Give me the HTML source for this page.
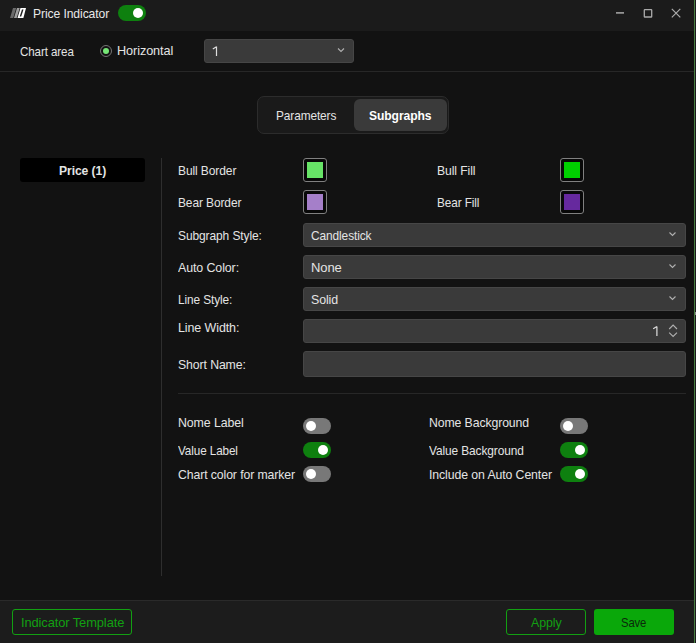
<!DOCTYPE html>
<html><head><meta charset="utf-8">
<style>
*{margin:0;padding:0;box-sizing:border-box}
html,body{width:696px;height:643px;overflow:hidden;background:#121212}
body{position:relative;font-family:"Liberation Sans",sans-serif;font-size:13px;color:#e4e4e4;letter-spacing:-0.45px}
.a{position:absolute}
.t{position:absolute;line-height:16px;white-space:nowrap}
.b{font-weight:bold}
.title{left:0;top:0;width:696px;height:31px;background:#1b1b1b}
.sep{height:1px;background:#272727}
.sel{background:#3a3a3a;border-radius:3px;border:1px solid #464646}
.chev{position:absolute;width:5px;height:5px;border-right:1.2px solid #b8b8b8;border-bottom:1.2px solid #b8b8b8;transform:rotate(45deg)}
.sw{position:absolute;width:24px;height:24px;border:1px solid #808080;border-radius:3px;background:#080808}
.sw i{position:absolute;left:3px;top:3px;width:16px;height:16px}
.tg{position:absolute;width:28px;height:16px;border-radius:8px;background:#787878}
.tg i{position:absolute;top:3px;left:3px;width:10px;height:10px;border-radius:50%;background:#fff}
.tg.on{background:#0e800f}
.tg.on i{left:15px}
.btn{position:absolute;height:26px;border:1px solid #12a012;border-radius:3px;color:#12a012}
.t{transform-origin:0 0}
</style></head><body>

<!-- title bar -->
<div class="a title"></div>
<div class="tg on" style="left:118px;top:5px"><i></i></div>
<svg class="a" style="left:0;top:0" width="40" height="31" viewBox="0 0 40 31">
  <polygon points="13,8 16.2,8 13.2,18 10,18" fill="#6a6a6a"/>
  <polygon points="17,8 19.7,8 16.7,18 14,18" fill="#a0a0a0"/>
  <polygon points="20.5,8 26,8 23.4,18 17.5,18" fill="#ffffff"/>
  <polygon points="22,9.6 23.5,9.6 21.2,16.6 19.7,16.6" fill="#1c1c1c"/>
</svg>
<svg class="a" style="left:600px;top:0" width="96" height="31" viewBox="600 0 96 31">
  <path d="M616 12.9H624" stroke="#aaaaaa" stroke-width="1.5"/>
  <rect x="644.3" y="9.6" width="7.4" height="7.4" fill="none" stroke="#aaaaaa" stroke-width="1.3" rx="0.6"/>
  <path d="M671.8 8.8L680.3 17.3M680.3 8.8L671.8 17.3" stroke="#aaaaaa" stroke-width="1.2"/>
</svg>

<!-- chart area row -->
<div class="a" style="left:100px;top:45px;width:12px;height:12px;border:1px solid #747474;border-radius:50%"></div>
<div class="a" style="left:103px;top:48px;width:6px;height:6px;background:#76e676;border-radius:50%"></div>
<div class="a sel" style="left:204px;top:39px;width:150px;height:24px"></div>
<svg class="a" style="left:0;top:0" width="696" height="80"><path d="M338 48.5L341 51.5L344 48.5" fill="none" stroke="#b0b0b0" stroke-width="1.1"/></svg>
<div class="a sep" style="left:0;top:71px;width:696px"></div>

<!-- tabs -->
<div class="a" style="left:257px;top:96px;width:192px;height:38px;border:1px solid #2c2c2c;border-radius:7px;background:#1a1a1a"></div>
<div class="a" style="left:354px;top:99px;width:93px;height:32px;border-radius:6px;background:#3a3a3a"></div>

<!-- left panel -->
<div class="a" style="left:20px;top:158px;width:125px;height:24px;background:#000;border-radius:3px"></div>
<div class="a" style="left:161px;top:158px;width:1px;height:418px;background:#2e2e2e"></div>

<!-- form -->
<div class="sw" style="left:303px;top:158px"><i style="background:#67e467"></i></div>
<div class="sw" style="left:560px;top:158px"><i style="background:#00d000"></i></div>

<div class="sw" style="left:303px;top:190px"><i style="background:#a57fc9"></i></div>
<div class="sw" style="left:560px;top:190px"><i style="background:#66299e"></i></div>

<div class="a sel" style="left:303px;top:223px;width:383px;height:24px"></div>
<svg class="a" style="left:660px;top:221px" width="30" height="30" viewBox="660 221 30 30"><path d="M669.5 232.5L672.5 235.5L675.5 232.5" fill="none" stroke="#b0b0b0" stroke-width="1.1"/></svg>

<div class="a sel" style="left:303px;top:255px;width:383px;height:24px"></div>
<svg class="a" style="left:660px;top:253px" width="30" height="30" viewBox="660 253 30 30"><path d="M669.5 264.5L672.5 267.5L675.5 264.5" fill="none" stroke="#b0b0b0" stroke-width="1.1"/></svg>

<div class="a sel" style="left:303px;top:287px;width:383px;height:24px"></div>
<svg class="a" style="left:660px;top:285px" width="30" height="30" viewBox="660 285 30 30"><path d="M669.5 296.5L672.5 299.5L675.5 296.5" fill="none" stroke="#b0b0b0" stroke-width="1.1"/></svg>

<div class="a sel" style="left:303px;top:319px;width:383px;height:24px"></div>
<svg class="a" style="left:660px;top:319px" width="26" height="24" viewBox="660 319 26 24"><path d="M669.2 329L673.1 325.1L677 329M669.2 332.6L673.1 336.5L677 332.6" fill="none" stroke="#b0b0b0" stroke-width="1.1"/></svg>

<div class="a sel" style="left:303px;top:351px;width:383px;height:26px"></div>

<div class="a sep" style="left:178px;top:393px;width:508px"></div>
<div class="tg" style="left:303px;top:418px"><i></i></div>
<div class="tg" style="left:560px;top:418px"><i></i></div>
<div class="tg on" style="left:303px;top:442px"><i></i></div>
<div class="tg on" style="left:560px;top:442px"><i></i></div>
<div class="tg" style="left:303px;top:466px"><i></i></div>
<div class="tg on" style="left:560px;top:466px"><i></i></div>




<svg class="a" style="left:200px;top:40px" width="30" height="20" viewBox="200 40 30 20"><path d="M216.5 46.6V56M212.8 49L216.5 46.8" fill="none" stroke="#dedede" stroke-width="1.2"/></svg>
<svg class="a" style="left:645px;top:320px" width="20" height="20" viewBox="645 320 20 20"><path d="M656.9 326.4V336M653.2 328.8L656.9 326.6" fill="none" stroke="#dedede" stroke-width="1.2"/></svg>
<!-- footer -->
<div class="a" style="left:0;top:600px;width:696px;height:43px;background:#1c1c1c;border-top:1px solid #2a2a2a"></div>
<div class="btn" style="left:12px;top:609px;width:120px"></div>
<div class="btn" style="left:506px;top:609px;width:80px"></div>
<div class="a" style="left:594px;top:609px;width:80px;height:26px;background:#0aa80a;border-radius:3px"></div>

<!-- right edge green line -->
<div class="a" style="left:694px;top:0;width:1px;height:643px;background:#477c40"></div>
<div class="a" style="left:695px;top:0;width:1px;height:643px;background:#1a1a1c"></div>
<div class="a" style="left:695px;top:312px;width:1px;height:3px;background:#8a8a8a"></div>

<div class="t" style="left:33px;top:6px;letter-spacing:-0.10px;transform:scaleX(0.933);color:#e8e8e8">Price Indicator</div>
<div class="t" style="left:20px;top:44px;letter-spacing:-0.10px;transform:scaleX(0.890)">Chart area</div>
<div class="t" style="left:117px;top:43px;letter-spacing:-0.10px;transform:scaleX(0.977)">Horizontal</div>
<div class="t" style="left:276px;top:108px;letter-spacing:-0.10px;transform:scaleX(0.911)">Parameters</div>
<div class="t b" style="left:369px;top:108px;letter-spacing:-0.10px;transform:scaleX(0.932);color:#fff">Subgraphs</div>
<div class="t b" style="left:59px;top:163px;letter-spacing:-0.10px;transform:scaleX(0.934)">Price (1)</div>
<div class="t" style="left:178px;top:163px;letter-spacing:-0.10px;transform:scaleX(0.922)">Bull Border</div>
<div class="t" style="left:437px;top:163px;letter-spacing:-0.10px;transform:scaleX(0.937)">Bull Fill</div>
<div class="t" style="left:178px;top:195px;letter-spacing:-0.10px;transform:scaleX(0.918)">Bear Border</div>
<div class="t" style="left:437px;top:195px;letter-spacing:-0.10px;transform:scaleX(0.904)">Bear Fill</div>
<div class="t" style="left:178px;top:228px;letter-spacing:-0.10px;transform:scaleX(0.921)">Subgraph Style:</div>
<div class="t" style="left:311px;top:228px;letter-spacing:-0.10px;transform:scaleX(0.915)">Candlestick</div>
<div class="t" style="left:178px;top:260px;letter-spacing:-0.10px;transform:scaleX(0.954)">Auto Color:</div>
<div class="t" style="left:311px;top:260px;letter-spacing:-0.10px">None</div>
<div class="t" style="left:178px;top:292px;letter-spacing:-0.10px;transform:scaleX(0.910)">Line Style:</div>
<div class="t" style="left:311px;top:292px;letter-spacing:-0.10px;transform:scaleX(0.953)">Solid</div>
<div class="t" style="left:178px;top:320px;letter-spacing:-0.10px;transform:scaleX(0.959)">Line Width:</div>
<div class="t" style="left:178px;top:357px;letter-spacing:-0.10px;transform:scaleX(0.943)">Short Name:</div>
<div class="t" style="left:178px;top:415px;letter-spacing:-0.10px;transform:scaleX(0.950)">Nome Label</div>
<div class="t" style="left:429px;top:415px;letter-spacing:-0.10px;transform:scaleX(0.942)">Nome Background</div>
<div class="t" style="left:178px;top:443px;letter-spacing:-0.10px;transform:scaleX(0.899)">Value Label</div>
<div class="t" style="left:429px;top:443px;letter-spacing:-0.10px;transform:scaleX(0.914)">Value Background</div>
<div class="t" style="left:178px;top:467px;letter-spacing:-0.10px;transform:scaleX(0.942)">Chart color for marker</div>
<div class="t" style="left:429px;top:467px;letter-spacing:-0.10px;transform:scaleX(0.945)">Include on Auto Center</div>
<div class="t" style="left:21px;top:615px;letter-spacing:-0.10px;transform:scaleX(0.991);color:#12a012">Indicator Template</div>
<div class="t" style="left:531px;top:615px;letter-spacing:-0.10px;transform:scaleX(0.955);color:#12a012">Apply</div>
<div class="t" style="left:621px;top:615px;letter-spacing:-0.10px;transform:scaleX(0.865);color:#0a2a0a">Save</div>
</body></html>
